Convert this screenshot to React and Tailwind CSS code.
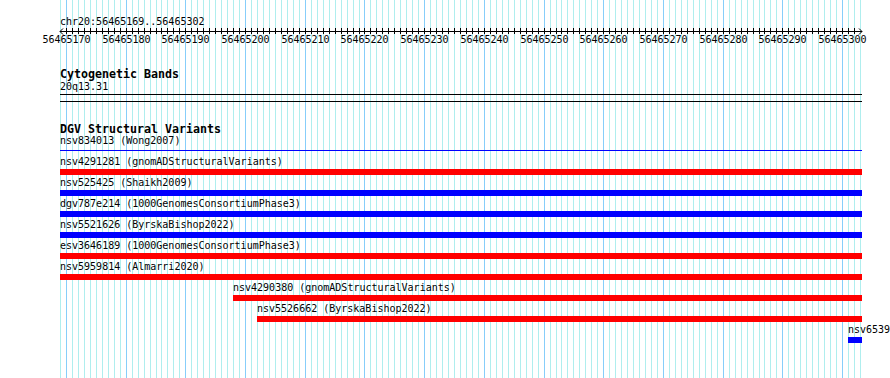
const START = 56465169;
const END = 56465302;
const LEFT = 60;
const RIGHT = 862;
const PX = 800 / (END - START + 1);

const xAt = (bp) => Math.round(LEFT + (bp - START) * PX);

const features = [
  { name: "nsv4291281 (gnomADStructuralVariants)", start: START, color: "bg-[#ff0000]" },
  { name: "nsv525425 (Shaikh2009)", start: START, color: "bg-[#0000ff]" },
  { name: "dgv787e214 (1000GenomesConsortiumPhase3)", start: START, color: "bg-[#0000ff]" },
  { name: "nsv5521626 (ByrskaBishop2022)", start: START, color: "bg-[#0000ff]" },
  { name: "esv3646189 (1000GenomesConsortiumPhase3)", start: START, color: "bg-[#ff0000]" },
  { name: "nsv5959814 (Almarri2020)", start: START, color: "bg-[#ff0000]" },
  { name: "nsv4290380 (gnomADStructuralVariants)", start: START + 29, color: "bg-[#ff0000]" },
  { name: "nsv5526662 (ByrskaBishop2022)", start: START + 33, color: "bg-[#ff0000]" },
  { name: "nsv6539", start: START + 132, color: "bg-[#0000ff]" },
];

function Grid() {
  const lines = [];
  for (let bp = START; bp <= END + 1; bp++) {
    const x = xAt(bp) + 0.5;
    lines.push(
      <line
        key={bp}
        x1={x}
        x2={x}
        y1={0}
        y2={378}
        stroke={bp % 10 === 0 ? "#87cefa" : "#afeeee"}
        strokeWidth="1"
      />
    );
  }
  return (
    <svg className="absolute inset-0" width="890" height="378" xmlns="http://www.w3.org/2000/svg">
      {lines}
    </svg>
  );
}

function Ruler() {
  const ticks = [];
  const labels = [];
  for (let bp = START + 1; bp <= END; bp++) {
    const x = xAt(bp) + 0.5;
    ticks.push(<line key={bp} x1={x} x2={x} y1={0} y2={6} stroke="#000" strokeWidth="1" />);
    if (bp % 10 === 0) {
      labels.push(
        <text key={bp} x={xAt(bp) + 0.5} y={15} textAnchor="middle" fontSize="10" fill="#000">
          {bp}
        </text>
      );
    }
  }
  return (
    <svg className="block" width="890" height="20" xmlns="http://www.w3.org/2000/svg">
      <line x1={LEFT} x2={RIGHT} y1={3.5} y2={3.5} stroke="#000" strokeWidth="1" />
      {ticks}
      <polyline points={`${LEFT + 3},0.5 ${LEFT},3.5 ${LEFT + 3},6.5`} fill="none" stroke="#000" strokeWidth="1" />
      <polyline points={`${RIGHT - 3},0.5 ${RIGHT},3.5 ${RIGHT - 3},6.5`} fill="none" stroke="#000" strokeWidth="1" />
      {labels}
    </svg>
  );
}

function FeatureRow({ name, start, color }) {
  const x = xAt(start);
  return (
    <div className="pb-px">
      <div className="h-[13px] whitespace-nowrap leading-[13px]" style={{ marginLeft: x - LEFT }}>
        {name}
      </div>
      <div className={`mt-px h-[6px] ${color}`} style={{ marginLeft: x - LEFT, width: RIGHT - x }} />
    </div>
  );
}

export default function App() {
  return (
    <div className="relative h-[378px] w-[890px] overflow-hidden bg-white font-['DejaVu_Sans_Mono',monospace] text-[10px] text-black">
      <Grid />
      <div className="relative pt-[15px]">
        <div className="ml-[60px] h-[13px] whitespace-nowrap leading-[13px]">chr20:56465169..56465302</div>
        <Ruler />

        <div className="ml-[60px] w-[802px]">
          <div className="mt-[20px] h-[12px] text-[11.63px] font-bold leading-[12px]">Cytogenetic Bands</div>
          <div className="h-[13px] leading-[13px]">20q13.31</div>
          <div className="mt-px h-px bg-black" />
          <div className="mt-[6px] h-px bg-black" />

          <div className="mt-[21px] h-[11px] text-[11.63px] font-bold leading-[12px]">DGV Structural Variants</div>
          <div className="h-[13px] leading-[13px]">nsv834013 (Wong2007)</div>
          <div className="mt-[3px] h-px bg-[#0000ff]" />

          <div className="mt-[4px]">
            {features.map((f) => (
              <FeatureRow key={f.name} {...f} />
            ))}
          </div>
        </div>
      </div>
    </div>
  );
}
